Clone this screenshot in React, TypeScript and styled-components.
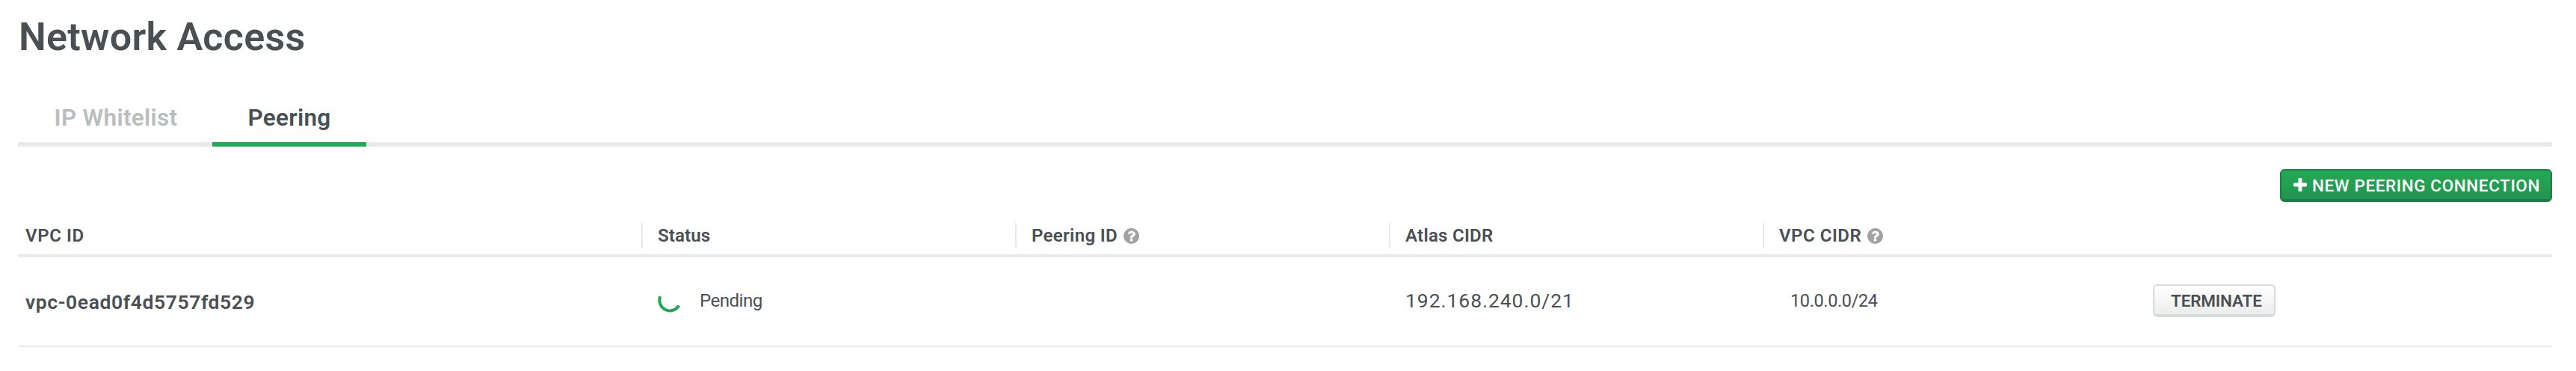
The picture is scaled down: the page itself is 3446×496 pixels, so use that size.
import React from "react";
import styled, { createGlobalStyle } from "styled-components";

const GlobalStyle = createGlobalStyle`
  * { box-sizing: border-box; }
  body {
    margin: 0;
    background: #fff;
    color: #494f53;
    font-family: Roboto, "Liberation Sans", sans-serif;
  }
`;

const Page = styled.main`
  padding: 20px 32px 32px 24px;
`;

const Title = styled.h1`
  margin: 0;
  padding-left: 1px;
  font-size: 52px;
  font-weight: 600;
  line-height: 60px;
  letter-spacing: 0.28px;
`;

const Tabs = styled.nav`
  display: flex;
  margin-top: 46px;
  box-shadow: inset 0 -6px #e8eae9;
`;

const Tab = styled.a<{ $active?: boolean; $width: number }>`
  width: ${(p) => p.$width}px;
  height: 70px;
  padding-left: ${(p) => (p.$active ? 0 : 2)}px;
  border-bottom: 6px solid ${(p) => (p.$active ? "#23a955" : "transparent")};
  color: ${(p) => (p.$active ? "#494f53" : "#babdbe")};
  font-size: 31.5px;
  font-weight: 600;
  line-height: 63px;
  letter-spacing: 0.3px;
  text-align: center;
`;

const Toolbar = styled.div`
  display: flex;
  justify-content: flex-end;
  margin-top: 30px;
`;

const Button = styled.button<{ $primary?: boolean }>`
  display: flex;
  align-items: center;
  width: ${(p) => (p.$primary ? 364 : 164)}px;
  height: 44px;
  margin: 0;
  padding: ${(p) => (p.$primary ? "2px 0 0 16px" : "2px 0 0 22px")};
  border: 2px solid ${(p) => (p.$primary ? "#1b8044" : "#d7dbda")};
  border-bottom-width: 4px;
  border-radius: 6px;
  background: ${(p) =>
    p.$primary
      ? "linear-gradient(#23a955, #239451)"
      : "linear-gradient(#fff, #ededed)"};
  background-clip: padding-box;
  background-color: ${(p) => (p.$primary ? "#1b8044" : "#d7dbda")};
  color: ${(p) => (p.$primary ? "#fff" : "#494f53")};
  font-family: inherit;
  font-size: 22.5px;
  font-weight: ${(p) => (p.$primary ? 500 : 600)};
  line-height: 26px;
  letter-spacing: ${(p) => (p.$primary ? 0.59 : -0.18)}px;
  white-space: nowrap;
`;

const PlusIcon = styled.svg`
  width: 18px;
  height: 18px;
  margin: -3px 7px 0 0;
  fill: currentColor;
`;

const Columns = styled.div`
  display: grid;
  grid-template-columns: 834px repeat(4, 500px) 1fr;
`;

const HeaderRow = styled(Columns)`
  margin-top: 28px;
  padding-bottom: 8px;
  border-bottom: 4px solid #e8eae9;
`;

const HeaderCell = styled.div<{ $first?: boolean; $spacing: number }>`
  display: flex;
  align-items: center;
  height: 34px;
  padding-left: ${(p) => (p.$first ? 10 : 20)}px;
  border-left: ${(p) => (p.$first ? "none" : "2px solid #e8eae9")};
  font-size: 24px;
  font-weight: 600;
  line-height: 34px;
  letter-spacing: ${(p) => p.$spacing}px;
`;

const HelpIcon = styled.svg`
  width: 21px;
  height: 21px;
  margin: 1px 0 0 8px;
  fill: #a2a2a2;
`;

const Row = styled(Columns)`
  height: 120px;
  border-bottom: 2px solid #e8eae9;
`;

const Cell = styled.div`
  display: flex;
  align-items: center;
  padding: 0 0 2px 22px;
  font-size: 24px;
  letter-spacing: -0.47px;
`;

const VpcIdCell = styled(Cell)`
  padding: 0 0 0 10px;
  font-size: 26.5px;
  font-weight: 600;
  letter-spacing: 0.59px;
`;

const AtlasCidrCell = styled(Cell)`
  padding-bottom: 4px;
  font-size: 26.5px;
  letter-spacing: 0.95px;
`;

const VpcCidrCell = styled(Cell)`
  padding-left: 37px;
  font-size: 23.5px;
  letter-spacing: -0.37px;
`;

const Spinner = styled.svg`
  width: 32px;
  height: 32px;
  margin-right: 24px;
  fill: none;
  stroke: #23a955;
  stroke-width: 4;
`;

const Help = () => (
  <HelpIcon viewBox="0 128 1536 1536">
    <path d="M896 1376v-192q0-14-9-23t-23-9h-192q-14 0-23 9t-9 23v192q0 14 9 23t23 9h192q14 0 23-9t9-23zm256-672q0-88-55.5-163t-138.5-116-170-41q-243 0-371 213-15 24 8 42l132 100q7 6 19 6 16 0 25-12 53-68 86-92 34-24 86-24 48 0 85.5 26t37.5 59q0 38-20 61t-68 45q-63 28-115.5 86.5t-52.5 125.5v36q0 14 9 23t23 9h192q14 0 23-9t9-23q0-19 21.5-49.5t54.5-49.5q32-18 49-28.5t46-35 44.5-48 28-60.5 12.5-81zm384 192q0 209-103 385.5t-279.5 279.5-385.5 103-385.5-103-279.5-279.5-103-385.5 103-385.5 279.5-279.5 385.5-103 385.5 103 279.5 279.5 103 385.5z" />
  </HelpIcon>
);

const columns = [
  { label: "VPC ID", spacing: 0.61 },
  { label: "Status", spacing: 0.13 },
  { label: "Peering ID", spacing: 0.35, help: true },
  { label: "Atlas CIDR", spacing: 0.27 },
  { label: "VPC CIDR", spacing: 0.52, help: true },
];

export default function App() {
  return (
    <Page>
      <GlobalStyle />
      <Title>Network Access</Title>
      <Tabs>
        <Tab $width={260}>IP Whitelist</Tab>
        <Tab $width={206} $active>
          Peering
        </Tab>
      </Tabs>
      <Toolbar>
        <Button $primary>
          <PlusIcon viewBox="192 128 1408 1408">
            <path d="M1600 736v192q0 40-28 68t-68 28h-416v416q0 40-28 68t-68 28h-192q-40 0-68-28t-28-68v-416h-416q-40 0-68-28t-28-68v-192q0-40 28-68t68-28h416v-416q0-40 28-68t68-28h192q40 0 68 28t28 68v416h416q40 0 68 28t28 68z" />
          </PlusIcon>
          NEW PEERING CONNECTION
        </Button>
      </Toolbar>
      <HeaderRow>
        {columns.map((c, i) => (
          <HeaderCell key={c.label} $first={i === 0} $spacing={c.spacing}>
            {c.label}
            {c.help && <Help />}
          </HeaderCell>
        ))}
      </HeaderRow>
      <Row>
        <VpcIdCell>vpc-0ead0f4d5757fd529</VpcIdCell>
        <Cell>
          <Spinner viewBox="0 0 32 32">
            <path d="M3.2 10.3 A14 14 0 0 0 28.3 22.5" />
          </Spinner>
          Pending
        </Cell>
        <Cell />
        <AtlasCidrCell>192.168.240.0/21</AtlasCidrCell>
        <VpcCidrCell>10.0.0.0/24</VpcCidrCell>
        <Cell>
          <Button>TERMINATE</Button>
        </Cell>
      </Row>
    </Page>
  );
}
